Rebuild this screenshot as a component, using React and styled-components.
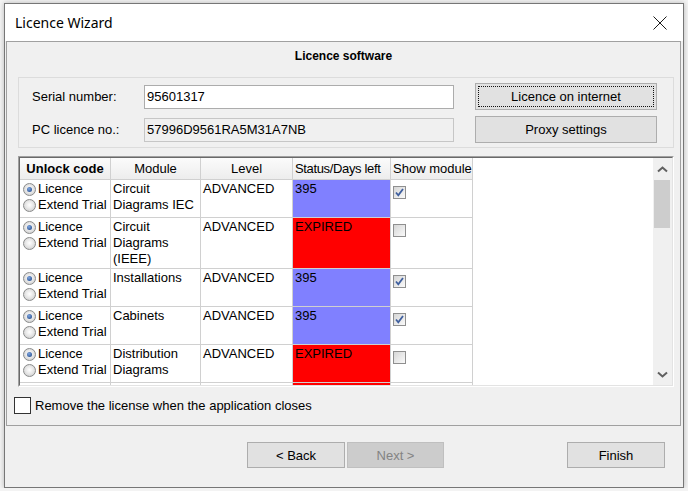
import React from "react";
import styled, { createGlobalStyle } from "styled-components";

const GlobalStyle = createGlobalStyle`
  body {
    margin: 0;
    background: #f3f3f3;
    font-family: "Liberation Sans", Arial, sans-serif;
    color: #000;
  }
`;

const Window = styled.div`
  box-sizing: border-box;
  margin: 3px 0 0 4px;
  width: 680px;
  height: 485px;
  border: 1px solid #767676;
  background: #f0f0f0;
  display: flex;
  flex-direction: column;
  box-shadow: 0 0 5px rgba(0, 0, 0, 0.25);
`;

const TitleBar = styled.div`
  height: 37px;
  flex: none;
  background: #fff;
  display: flex;
  align-items: center;
  justify-content: space-between;
  padding: 0 16px 0 10px;
  font-family: "Noto Sans", "Open Sans", sans-serif;
  font-size: 14px;
`;

const Panel = styled.div`
  box-sizing: border-box;
  flex: none;
  height: 385px;
  margin: 0 2px 0 1px;
  border: 1px solid #a0a0a0;
  display: flex;
  flex-direction: column;
`;

const Heading = styled.div`
  height: 35px;
  padding-top: 7px;
  box-sizing: border-box;
  text-align: center;
  font-size: 12px;
  font-weight: bold;
  line-height: 14px;
`;

const Group = styled.div`
  box-sizing: border-box;
  margin-left: 11px;
  width: 656px;
  height: 71px;
  border: 1px solid #dcdcdc;
  padding: 5px 0 0 13px;
  display: grid;
  grid-template-columns: 91px 310px 182px;
  grid-template-rows: 27px 27px;
  column-gap: 21px;
  row-gap: 6px;
  align-items: center;
`;

const Label = styled.div`
  font-size: 13px;
  white-space: nowrap;
`;

const Field = styled.input`
  box-sizing: border-box;
  width: 310px;
  height: 24px;
  margin: 0;
  padding: 0 2px;
  border: 1px solid ${(p) => (p.$disabled ? "#c6c6c6" : "#acacac")};
  background: ${(p) => (p.$disabled ? "#f0f0f0" : "#fff")};
  font-family: "Liberation Sans", Arial, sans-serif;
  font-size: 13px;
  color: #000;
  outline: none;
`;

const Button = styled.button`
  box-sizing: border-box;
  width: ${(p) => p.$w || 182}px;
  height: ${(p) => p.$h || 27}px;
  margin: 0;
  padding: 0;
  background: ${(p) => (p.disabled ? "#cccccc" : "#e1e1e1")};
  border: 1px solid ${(p) => (p.disabled ? "#bfbfbf" : "#adadad")};
  color: ${(p) => (p.disabled ? "#838383" : "#000")};
  font-family: "Liberation Sans", Arial, sans-serif;
  font-size: 13px;
  outline: ${(p) => (p.$focused ? "1px dotted #111" : "none")};
  outline-offset: -4px;
`;

const TableFrame = styled.div`
  box-sizing: border-box;
  margin: 8px 0 0 11px;
  width: 656px;
  height: 231px;
  border: 1px solid;
  border-color: #a0a0a0 #ffffff #ffffff #a0a0a0;
`;

const TableInner = styled.div`
  box-sizing: border-box;
  height: 100%;
  border: 1px solid;
  border-color: #696969 #e3e3e3 #e3e3e3 #696969;
  background: #fff;
  display: flex;
  overflow: hidden;
`;

const GridArea = styled.div`
  flex: 1;
  overflow: hidden;
`;

const Grid = styled.table`
  border-collapse: separate;
  border-spacing: 0;
  table-layout: fixed;
  width: 453px;
  font-size: 13px;
`;

const Th = styled.th`
  height: 21px;
  padding: 0 2px;
  border-right: 1px solid #d0d0d0;
  border-bottom: 1px solid #d0d0d0;
  background: linear-gradient(#fbfbfb, #ededed);
  font-weight: ${(p) => (p.$bold ? "bold" : "normal")};
  text-align: ${(p) => p.$align || "center"};
  letter-spacing: ${(p) => (p.$tight ? "-0.35px" : "0")};
  white-space: nowrap;
  overflow: hidden;
`;

const Tr = styled.tr`
  height: ${(p) => p.$h}px;
`;

const Td = styled.td`
  box-sizing: border-box;
  vertical-align: top;
  padding: 1px 2px 0;
  line-height: 16px;
  border-right: 1px solid #d0d0d0;
  border-bottom: 1px solid #d0d0d0;
  background: ${(p) =>
    p.$status === "ok" ? "#8080ff" : p.$status === "bad" ? "#ff0000" : "#fff"};
  overflow: hidden;
`;

const RadioLine = styled.div`
  display: flex;
  align-items: center;
  height: 16px;
  white-space: nowrap;
`;

const Radio = styled.span`
  box-sizing: border-box;
  flex: none;
  width: 13px;
  height: 13px;
  margin: 0 2px 0 1px;
  border-radius: 50%;
  border: 1px solid #8a8b8b;
  background: radial-gradient(circle at 50% 45%, #ffffff 0, #e8e8e8 45%, #c4c4c4 100%);
  display: inline-flex;
  align-items: center;
  justify-content: center;

  &::after {
    content: "";
    width: 5px;
    height: 5px;
    border-radius: 50%;
    background: radial-gradient(circle at 40% 35%, #7fa6e0, #173f80);
    display: ${(p) => (p.$checked ? "block" : "none")};
  }
`;

const Check = styled.span`
  box-sizing: border-box;
  display: block;
  width: 13px;
  height: 13px;
  margin-top: 5px;
  border: 1px solid #8f8f8f;
  background: linear-gradient(135deg, #d6d6d6, #fafafa);
`;

const ScrollBar = styled.div`
  flex: none;
  width: 19px;
  background: #f0f0f0;
  display: flex;
  flex-direction: column;
`;

const ScrollArrow = styled.div`
  height: 22px;
  display: flex;
  align-items: center;
  justify-content: center;
`;

const Thumb = styled.div`
  height: 48px;
  margin: 0 2px 0 1px;
  background: #cdcdcd;
`;

const Spacer = styled.div`
  flex: 1;
`;

const RemoveRow = styled.div`
  margin: 10px 0 0 7px;
  display: flex;
  align-items: center;
  font-size: 13px;
`;

const Box = styled.span`
  box-sizing: border-box;
  width: 17px;
  height: 17px;
  margin-right: 4px;
  border: 1px solid #333;
  background: #fff;
`;

const Footer = styled.div`
  flex: 1;
  display: flex;
  align-items: flex-start;
  padding: 16px 18px 0 242px;
  gap: 2px;
`;

const Push = styled.div`
  flex: 1;
`;

const CloseIcon = () => (
  <svg width="14" height="14" viewBox="0 0 14 14">
    <path d="M0.5 0.5 L13.5 13.5 M13.5 0.5 L0.5 13.5" stroke="#1a1a1a" strokeWidth="1" fill="none" />
  </svg>
);

const Chevron = ({ down }) => (
  <svg width="11" height="7" viewBox="0 0 11 7">
    <path
      d={down ? "M1 1.5 L5.5 5.5 L10 1.5" : "M1 5.5 L5.5 1.5 L10 5.5"}
      stroke="#606060"
      strokeWidth="2"
      fill="none"
    />
  </svg>
);

const CheckBox = ({ checked }) => (
  <Check>
    {checked && (
      <svg width="11" height="11" viewBox="0 0 11 11" style={{ display: "block" }}>
        <path d="M2 5.5 L4.3 8.3 L9 2" stroke="#3f5f9e" strokeWidth="1.8" fill="none" />
      </svg>
    )}
  </Check>
);

const rows = [
  { h: 38, module: ["Circuit", "Diagrams IEC"], status: "ok", text: "395", show: true },
  { h: 51, module: ["Circuit", "Diagrams", "(IEEE)"], status: "bad", text: "EXPIRED", show: false },
  { h: 38, module: ["Installations"], status: "ok", text: "395", show: true },
  { h: 38, module: ["Cabinets"], status: "ok", text: "395", show: true },
  { h: 38, module: ["Distribution", "Diagrams"], status: "bad", text: "EXPIRED", show: false },
];

const App = () => {
  return (
    <>
      <GlobalStyle />
      <Window>
        <TitleBar>
          <span>Licence Wizard</span>
          <CloseIcon />
        </TitleBar>
        <Panel>
          <Heading>Licence software</Heading>
          <Group>
            <Label>Serial number:</Label>
            <Field readOnly value="95601317" />
            <Button $focused>Licence on internet</Button>
            <Label>PC licence no.:</Label>
            <Field readOnly $disabled value="57996D9561RA5M31A7NB" />
            <Button>Proxy settings</Button>
          </Group>
          <TableFrame>
            <TableInner>
              <GridArea>
                <Grid>
                  <colgroup>
                    <col style={{ width: 91 }} />
                    <col style={{ width: 90 }} />
                    <col style={{ width: 92 }} />
                    <col style={{ width: 98 }} />
                    <col style={{ width: 82 }} />
                  </colgroup>
                  <thead>
                    <tr>
                      <Th $bold>Unlock code</Th>
                      <Th>Module</Th>
                      <Th>Level</Th>
                      <Th $align="left" $tight>Status/Days left</Th>
                      <Th $align="left">Show module</Th>
                    </tr>
                  </thead>
                  <tbody>
                    {rows.map((r, i) => (
                      <Tr key={i} $h={r.h}>
                        <Td>
                          <RadioLine>
                            <Radio $checked />
                            Licence
                          </RadioLine>
                          <RadioLine>
                            <Radio />
                            Extend Trial
                          </RadioLine>
                        </Td>
                        <Td>
                          {r.module.map((m, j) => (
                            <div key={j}>{m}</div>
                          ))}
                        </Td>
                        <Td>ADVANCED</Td>
                        <Td $status={r.status}>{r.text}</Td>
                        <Td>
                          <CheckBox checked={r.show} />
                        </Td>
                      </Tr>
                    ))}
                    <Tr $h={38}>
                      <Td />
                      <Td />
                      <Td />
                      <Td $status="bad" />
                      <Td />
                    </Tr>
                  </tbody>
                </Grid>
              </GridArea>
              <ScrollBar>
                <ScrollArrow>
                  <Chevron />
                </ScrollArrow>
                <Thumb />
                <Spacer />
                <ScrollArrow>
                  <Chevron down />
                </ScrollArrow>
              </ScrollBar>
            </TableInner>
          </TableFrame>
          <RemoveRow>
            <Box />
            Remove the license when the application closes
          </RemoveRow>
        </Panel>
        <Footer>
          <Button $w={98} $h={26}>&lt; Back</Button>
          <Button $w={97} $h={26} disabled>Next &gt;</Button>
          <Push />
          <Button $w={98} $h={26}>Finish</Button>
        </Footer>
      </Window>
    </>
  );
};

export default App;
